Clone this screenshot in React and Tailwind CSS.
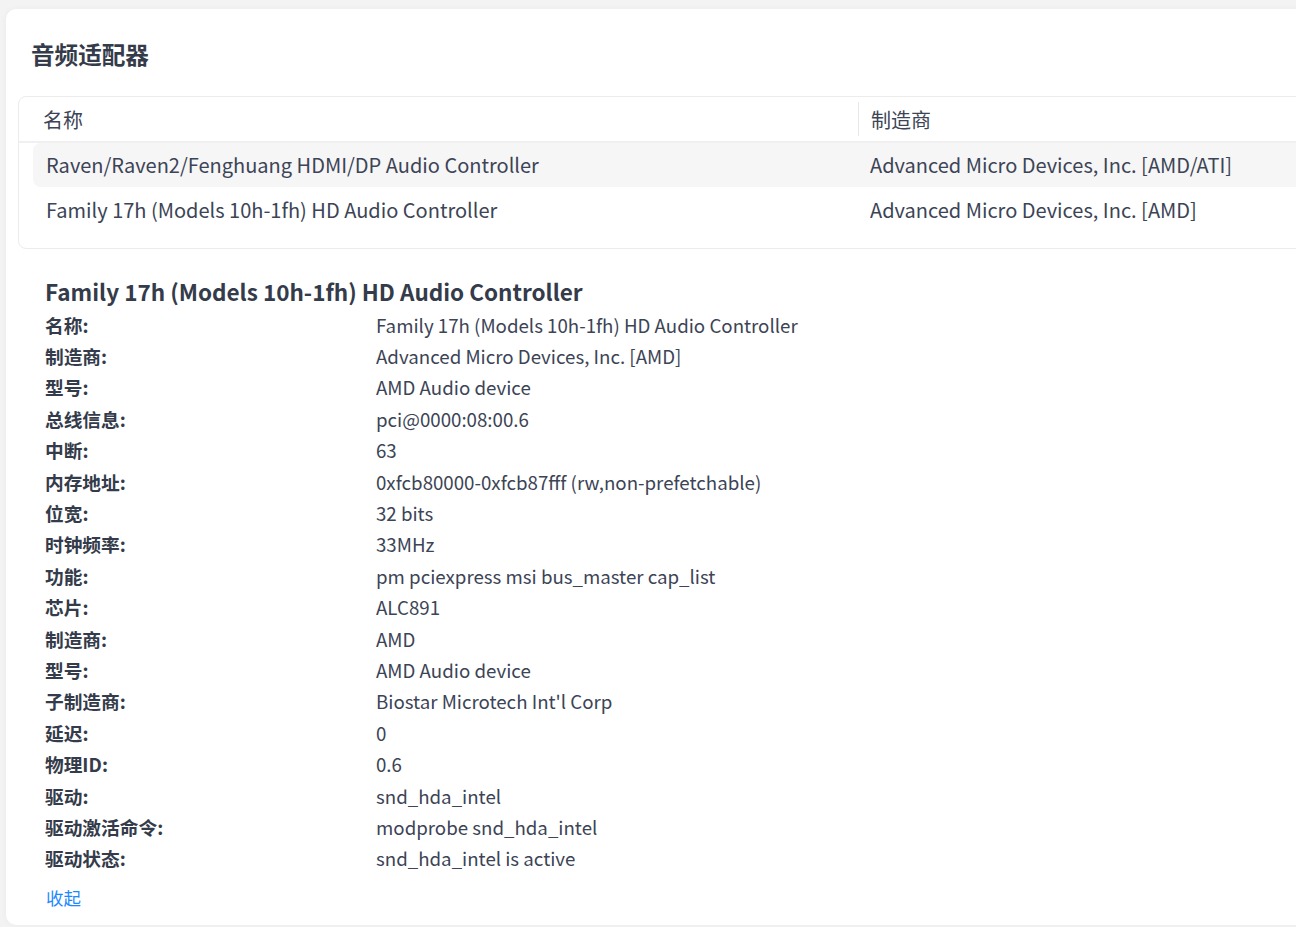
import React from "react";

const font = { fontFamily: '"Noto Sans CJK SC", "Noto Sans", sans-serif' };

const rows = [
  ["名称", "Family 17h (Models 10h-1fh) HD Audio Controller"],
  ["制造商", "Advanced Micro Devices, Inc. [AMD]"],
  ["型号", "AMD Audio device"],
  ["总线信息", "pci@0000:08:00.6"],
  ["中断", "63"],
  ["内存地址", "0xfcb80000-0xfcb87fff (rw,non-prefetchable)"],
  ["位宽", "32 bits"],
  ["时钟频率", "33MHz"],
  ["功能", "pm pciexpress msi bus_master cap_list"],
  ["芯片", "ALC891"],
  ["制造商", "AMD"],
  ["型号", "AMD Audio device"],
  ["子制造商", "Biostar Microtech Int'l Corp"],
  ["延迟", "0"],
  ["物理ID", "0.6"],
  ["驱动", "snd_hda_intel"],
  ["驱动激活命令", "modprobe snd_hda_intel"],
  ["驱动状态", "snd_hda_intel is active"],
];

export default function App() {
  return (
    <div className="min-h-screen bg-[#f3f3f3] pl-[6px] pt-[9px] overflow-hidden" style={font}>
      <div className="w-[1320px] h-[916px] bg-white rounded-[10px] shadow-[0_0_6px_rgba(0,0,0,0.04)] pl-[12px]">
        <h1 className="pl-[13px] pt-[28px] h-[87px] text-[23.6px] leading-[34px] font-bold text-[#343b4a]">音频适配器</h1>
        <div className="border border-[#ececec] rounded-[8px] h-[153px] text-[#3c4456]">
          <div className="flex h-[46px] items-center border-b-2 border-[#f0f0f0] text-[20px]">
            <div className="w-[839px] pl-[24px] pt-[2px]">名称</div>
            <div className="h-[34px] border-l border-[#e8e8e8] pl-[12px] pt-[2px] flex items-center">制造商</div>
          </div>
          <div className="pl-[14px]">
            <div className="flex h-[44px] items-center bg-[#f6f6f6] rounded-l-[8px] text-[20px]">
              <div className="w-[826px] pl-[13px]">Raven/Raven2/Fenghuang HDMI/DP Audio Controller</div>
              <div className="pl-[11px]">Advanced Micro Devices, Inc. [AMD/ATI]</div>
            </div>
            <div className="flex h-[45px] items-center text-[20px]">
              <div className="w-[826px] pl-[13px]">Family 17h (Models 10h-1fh) HD Audio Controller</div>
              <div className="pl-[11px]">Advanced Micro Devices, Inc. [AMD]</div>
            </div>
          </div>
        </div>
        <div className="pl-[27px] pt-[25px] text-[#3c4456]">
          <h2 className="text-[22.5px] leading-[34px] font-bold text-[#343b4a]">Family 17h (Models 10h-1fh) HD Audio Controller</h2>
          <div className="mt-[1px]">
            {rows.map(([k, v], i) => (
              <div key={i} className="flex h-[31.4px] items-center text-[18.7px]">
                <div className="w-[331px] font-bold text-[#343b4a]">{k}:</div>
                <div>{v}</div>
              </div>
            ))}
          </div>
          <div className="mt-[11px] pl-[1px] text-[17.5px] text-[#1e88ff]">收起</div>
        </div>
      </div>
    </div>
  );
}
